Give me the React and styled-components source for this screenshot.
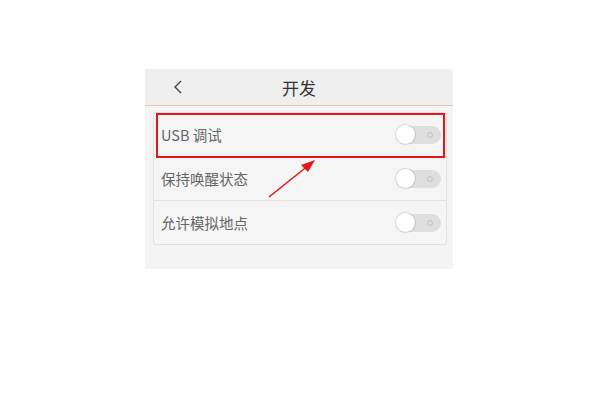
import styled, { createGlobalStyle } from "styled-components";

const Global = createGlobalStyle`
  html, body { margin: 0; padding: 0; background: #fff; }
  body { font-family: "Noto Sans CJK SC", "Liberation Sans", sans-serif; }
`;

const Page = styled.div`
  width: 600px;
  height: 400px;
  padding: 69px 0 0 145px;
  box-sizing: border-box;
`;

const Screen = styled.div`
  position: relative;
  width: 308px;
  height: 200px;
  background: #f4f4f4;
  display: flex;
  flex-direction: column;
`;

const Header = styled.div`
  height: 36px;
  background: #efefef;
  border-bottom: 1.5px solid #f0c498;
  display: grid;
  grid-template-columns: 60px 1fr 60px;
  align-items: center;
  flex-shrink: 0;
`;

const Back = styled.svg`
  justify-self: center;
  margin-left: 5px;
`;

const Title = styled.div`
  text-align: center;
  font-size: 17px;
  color: #333;
`;

const Card = styled.div`
  margin: 6px 6px 0 8px;
  border: 1px solid #e2e2e2;
  border-radius: 3px;
  background: #f5f5f5;
`;

const Row = styled.div`
  height: 43px;
  display: flex;
  align-items: center;
  justify-content: space-between;
  padding: 0 5px 0 7px;
  border-top: ${(p) => (p.$first ? "none" : "1px solid #e4e4e4")};
`;

const Label = styled.span`
  font-size: 14.5px;
  color: #666;
`;

const Track = styled.div`
  width: 45px;
  height: 18px;
  border-radius: 9px;
  background: #dedede;
  display: flex;
  align-items: center;
  justify-content: space-between;
  padding-right: 8px;
  box-sizing: border-box;
`;

const Knob = styled.div`
  width: 19px;
  height: 19px;
  border-radius: 50%;
  background: #fff;
  box-shadow: 0 0 1px 1px rgba(0, 0, 0, 0.12);
`;

const Dot = styled.div`
  width: 4px;
  height: 4px;
  border-radius: 50%;
  border: 1px solid #c4c4c4;
`;

const Highlight = styled.div`
  position: absolute;
  left: 11px;
  top: 44px;
  width: 285px;
  height: 41px;
  border: 2px solid #e3161c;
`;

const Arrow = styled.svg`
  position: absolute;
  left: 120px;
  top: 86px;
`;

const Toggle = () => (
  <Track>
    <Knob />
    <Dot />
  </Track>
);

const items = ["USB 调试", "保持唤醒状态", "允许模拟地点"];

export default function App() {
  return (
    <Page>
      <Global />
      <Screen>
        <Header>
          <Back width="10" height="14" viewBox="0 0 10 14">
            <path d="M8 1 L2 7 L8 13" fill="none" stroke="#444" strokeWidth="1.4" />
          </Back>
          <Title>开发</Title>
          <span />
        </Header>
        <Card>
          {items.map((t, i) => (
            <Row key={t} $first={i === 0}>
              <Label>{t}</Label>
              <Toggle />
            </Row>
          ))}
        </Card>
        <Highlight />
        <Arrow width="56" height="48" viewBox="0 0 56 48">
          <line x1="4" y1="42" x2="44" y2="10" stroke="#e3161c" strokeWidth="1.6" />
          <polygon points="50,5 36,10 43,17" fill="#e3161c" />
        </Arrow>
      </Screen>
    </Page>
  );
}
